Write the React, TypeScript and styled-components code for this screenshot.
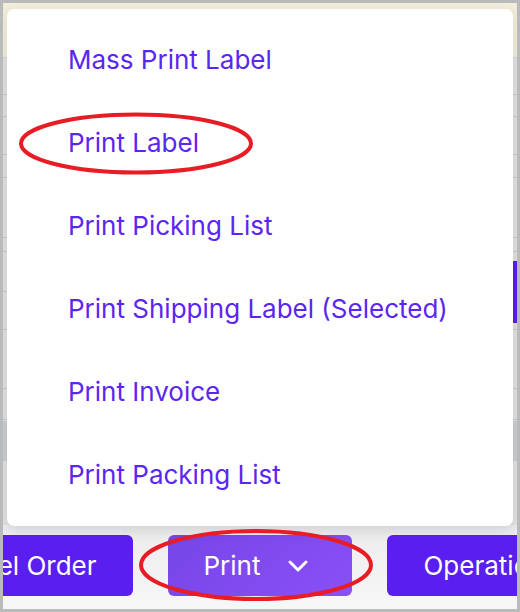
import React from "react";
import styled, { createGlobalStyle } from "styled-components";

const GlobalStyle = createGlobalStyle`
  html, body {
    margin: 0;
    padding: 0;
    background: #ffffff;
  }
  * {
    box-sizing: border-box;
  }
`;

const menuItems = [
  "Mass Print Label",
  "Print Label",
  "Print Picking List",
  "Print Shipping Label (Selected)",
  "Print Invoice",
  "Print Packing List",
];

const rowLines = [36, 58, 96, 119, 179, 193, 233, 271, 330, 361];

const App = () => {
  return (
    <Frame>
      <GlobalStyle />
      <Page>
        <TopBar />
        <Table>
          {rowLines.map((y, i) => (
            <RowLine key={i} style={{ top: y }} />
          ))}
          <SideTab />
          <GreyBand />
        </Table>
        <Footer>
          <Side $align="flex-end">
            <ActionButton>Cancel Order</ActionButton>
          </Side>
          <ActionButton $active>
            Print
            <Chevron viewBox="0 0 24 24">
              <path d="M4 8l8 8 8-8" />
            </Chevron>
          </ActionButton>
          <Side $align="flex-start">
            <ActionButton>Operation</ActionButton>
          </Side>
        </Footer>
      </Page>

      <Menu>
        {menuItems.map((label) => (
          <MenuItem key={label}>{label}</MenuItem>
        ))}
      </Menu>

      <Marks viewBox="0 0 514 606">
        <ellipse cx="133" cy="140.5" rx="115" ry="29" />
        <ellipse cx="253" cy="562" rx="115" ry="34" />
      </Marks>
    </Frame>
  );
};

export default App;

const Frame = styled.div`
  position: relative;
  width: 520px;
  height: 612px;
  border: 3px solid #b9baba;
  overflow: hidden;
  font-family: Inter, "Noto Sans", sans-serif;
`;

const Page = styled.div`
  display: flex;
  flex-direction: column;
  height: 100%;
  background: #e4e4e6;
`;

const TopBar = styled.div`
  height: 55px;
  background: #f3eedc;
  border-bottom: 1px solid #d6d6d8;
`;

const Table = styled.div`
  position: relative;
  flex: 1;
  background: #e2e2e3;
`;

const RowLine = styled.div`
  position: absolute;
  left: 0;
  right: 0;
  height: 1px;
  background: #c4c8cf;
`;

const SideTab = styled.div`
  position: absolute;
  right: 0;
  top: 203px;
  width: 4px;
  height: 62px;
  background: #5a1ff0;
`;

const GreyBand = styled.div`
  position: absolute;
  left: 0;
  right: 0;
  top: 363px;
  height: 40px;
  background: #cdced2;
`;

const Footer = styled.div`
  display: flex;
  gap: 35px;
  padding: 10px 0 13px;
  background: linear-gradient(#ececec, #f7f7f7);
`;

const Side = styled.div<{ $align: string }>`
  flex: 1;
  min-width: 0;
  display: flex;
  justify-content: ${(p) => p.$align};
`;

const ActionButton = styled.div<{ $active?: boolean }>`
  flex: none;
  display: flex;
  align-items: center;
  gap: 26px;
  height: 61px;
  padding: ${(p) => (p.$active ? "0 42px 0 36px" : "0 36px")};
  border-radius: 6px;
  background: ${(p) =>
    p.$active ? "linear-gradient(135deg, #7646e6, #8a4ff8)" : "#5a1ff0"};
  color: #ffffff;
  font-size: 26px;
  white-space: nowrap;
`;

const Chevron = styled.svg`
  width: 24px;
  height: 24px;
  fill: none;
  stroke: #ffffff;
  stroke-width: 3;
  stroke-linecap: round;
  stroke-linejoin: round;
`;

const Menu = styled.div`
  position: absolute;
  left: 4px;
  top: 6px;
  width: 506px;
  height: 517px;
  display: flex;
  flex-direction: column;
  justify-content: space-around;
  padding: 9.5px 0;
  background: #ffffff;
  border-radius: 7px;
  box-shadow: 0 4px 14px rgba(0, 0, 0, 0.12);
`;

const MenuItem = styled.div`
  padding-left: 61px;
  color: #5b26f1;
  font-size: 26px;
  line-height: 32px;
`;

const Marks = styled.svg`
  position: absolute;
  left: 0;
  top: 0;
  width: 514px;
  height: 606px;
  pointer-events: none;
  fill: none;
  stroke: #e81c24;
  stroke-width: 4;
`;
